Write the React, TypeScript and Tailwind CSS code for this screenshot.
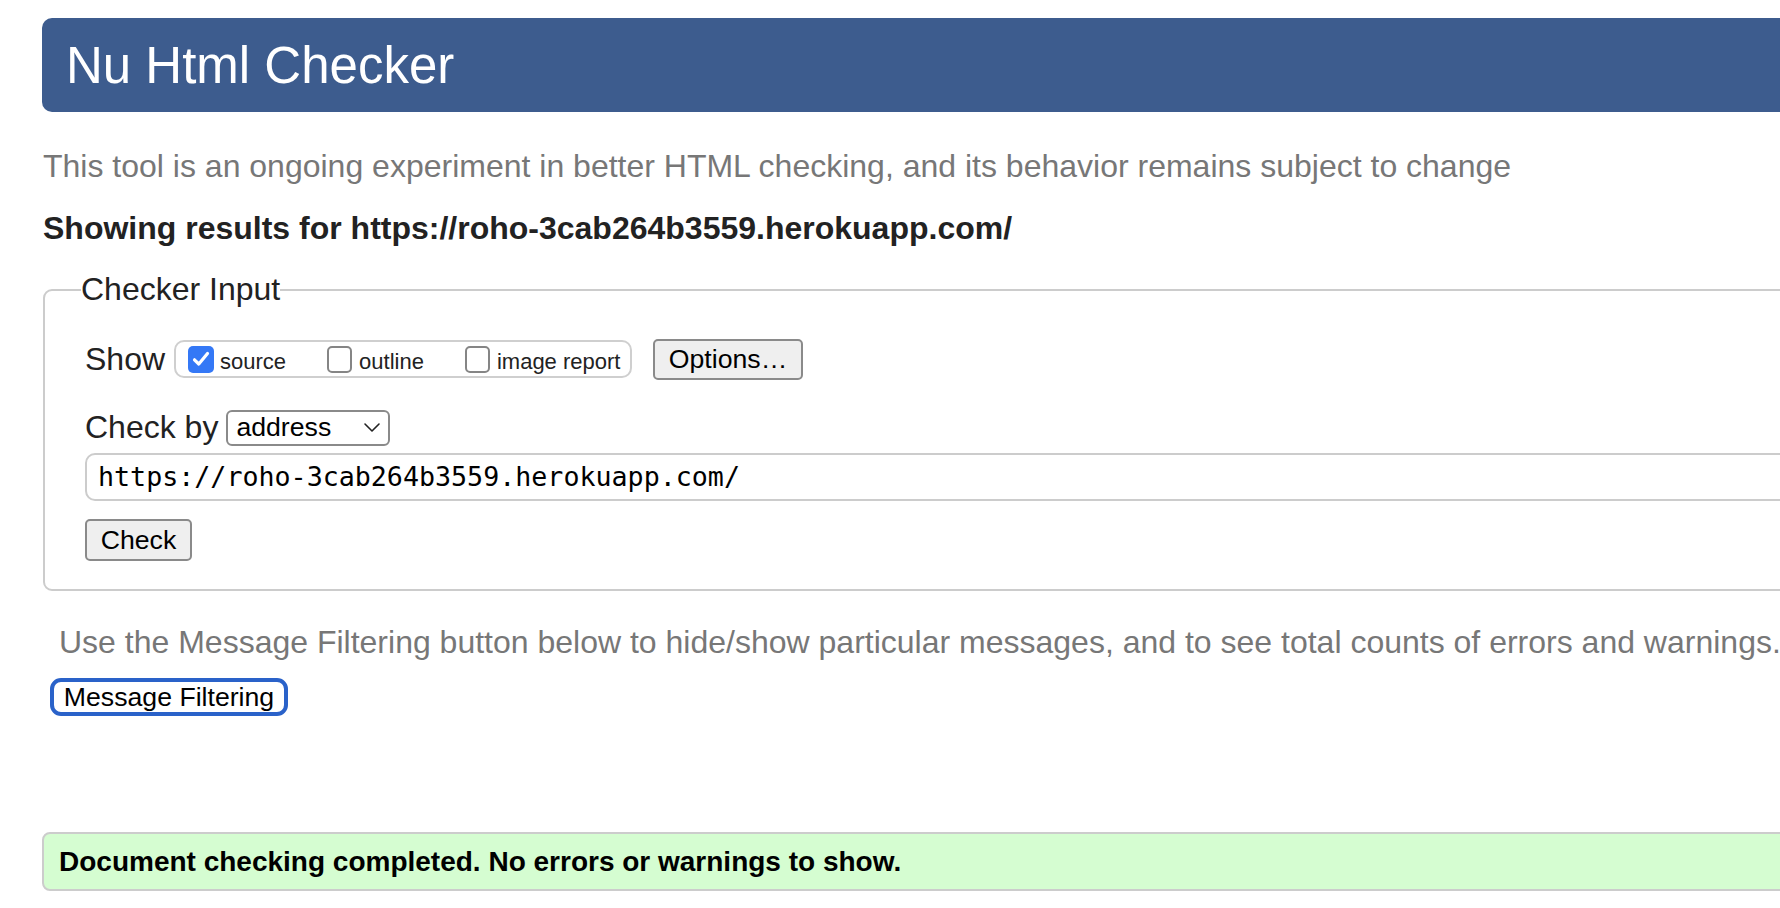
import React from "react";

function Box({ checked }: { checked?: boolean }) {
  if (checked) {
    return (
      <span className="flex h-[27px] w-[26px] items-center justify-center rounded-[5px] bg-[#3478f6]">
        <svg width="18" height="16" viewBox="0 0 18 16" fill="none">
          <path d="M2.5 8.8 L6.8 13 L15.5 2.5" stroke="#fff" strokeWidth="3.2" strokeLinecap="round" strokeLinejoin="round" />
        </svg>
      </span>
    );
  }
  return <span className="block h-[27px] w-[25px] rounded-[5px] border-2 border-[#858585] bg-white" />;
}

export default function App() {
  return (
    <div className="min-h-[908px] w-full overflow-hidden bg-white font-['Liberation_Sans',Arial,sans-serif] text-[#222]">
      <div className="ml-[42px] mr-[-40px] mt-[18px] flex h-[94px] items-center rounded-l-[10px] bg-[#3d5c8e] pl-[24px]">
        <h1 className="text-[51px] leading-none text-white">Nu Html Checker</h1>
      </div>

      <p className="ml-[43px] mt-[36px] whitespace-nowrap text-[32px] leading-[37px] text-[#777]">
        This tool is an ongoing experiment in better HTML checking, and its behavior remains subject to change
      </p>

      <p className="ml-[43px] mt-[25px] whitespace-nowrap text-[32px] font-bold leading-[37px] text-[#222]">
        Showing results for https://roho-3cab264b3559.herokuapp.com/
      </p>

      <fieldset className="ml-[43px] mr-[-40px] mt-[24px] rounded-[9px] border-2 border-[#cccccc] pb-[28px] pl-[40px]">
        <legend className="ml-[-4px] text-[32px] leading-[37px] text-[#222]">Checker Input</legend>

        <div className="mt-[30px] flex h-[42px] items-center">
          <span className="text-[32px] leading-[37px]">Show</span>
          <div className="ml-[9px] flex h-[38px] w-[458px] items-center rounded-[10px] border-2 border-[#cfcfcf] pl-[12px] text-[22px]">
            <Box checked />
            <span className="ml-[6px] mt-[4px]">source</span>
            <span className="ml-[41px]"><Box /></span>
            <span className="ml-[7px] mt-[4px]">outline</span>
            <span className="ml-[41px]"><Box /></span>
            <span className="ml-[7px] mt-[4px]">image report</span>
          </div>
          <button className="ml-[21px] h-[41px] w-[150px] rounded-[5px] border-2 border-[#8a8a8a] bg-[#efefef] text-[26.67px] leading-none text-black">
            Options…
          </button>
        </div>

        <div className="mt-[29px] flex h-[37px] items-center">
          <span className="text-[32px] leading-[37px]">Check by</span>
          <div className="ml-[8px] flex h-[36px] w-[164px] items-center justify-between rounded-[6px] border-2 border-[#8a8a8a] bg-white pl-[8px] pr-[7px] text-[26.67px] leading-none text-black">
            <span>address</span>
            <svg width="18" height="11" viewBox="0 0 18 11" fill="none">
              <path d="M2 2 L9 9 L16 2" stroke="#222" strokeWidth="1.6" strokeLinecap="round" strokeLinejoin="round" />
            </svg>
          </div>
        </div>

        <div className="mt-[7px] flex h-[48px] items-center rounded-[10px] border-2 border-[#cccccc] pl-[11px] font-['DejaVu_Sans_Mono',monospace] text-[26.67px] text-black">
          https://roho-3cab264b3559.herokuapp.com/
        </div>

        <button className="mt-[18px] block h-[42px] w-[107px] rounded-[5px] border-2 border-[#8a8a8a] bg-[#efefef] text-[26.67px] leading-none text-black">
          Check
        </button>
      </fieldset>

      <p className="ml-[59px] mt-[33px] whitespace-nowrap text-[32px] leading-[37px] text-[#777]">
        Use the Message Filtering button below to hide/show particular messages, and to see total counts of errors and warnings.
      </p>

      <button className="ml-[50px] mt-[17px] block h-[38px] w-[238px] rounded-[11px] border-[4px] border-[#2a62c9] bg-white text-[26.67px] leading-none text-black">
        Message Filtering
      </button>

      <div className="ml-[42px] mr-[-40px] mt-[116px] flex h-[59px] items-center rounded-l-[8px] border-2 border-[#cccccc] bg-[#d5fdd1] pl-[15px]">
        <span className="text-[28px] font-bold leading-none text-black">
          Document checking completed. No errors or warnings to show.
        </span>
      </div>
    </div>
  );
}
